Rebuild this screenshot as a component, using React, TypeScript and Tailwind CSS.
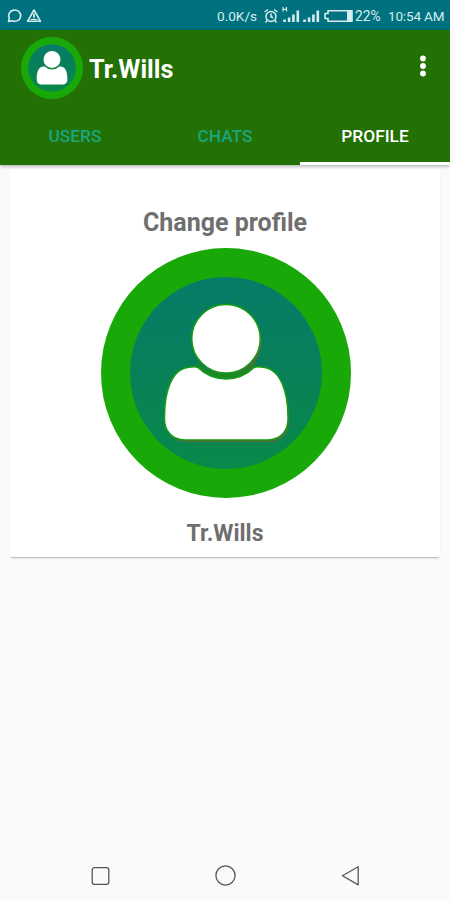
import { useId, useState } from "react";

const TABS = ["USERS", "CHATS", "PROFILE"];

function Avatar({ className, small = false }: { className: string; small?: boolean }) {
  const id = useId();
  const body =
    "M88 119.3 Q94 117.8 97 119.5 A40 40 0 0 0 153 119.5 Q156 117.8 162 119.3 C180 121 187 145 187 168 C188 183 180 192 166 192 H84 C71 192 62.5 183 63.5 168 C63.5 145 70 121 88 119.3 Z";

  return (
    <svg viewBox="0 0 250 250" className={className}>
      <defs>
        <linearGradient id={id} x1="0" y1="0" x2="0" y2="1">
          <stop offset="0" stopColor="#067b68" />
          <stop offset="0.5" stopColor="#088058" />
          <stop offset="1" stopColor="#088a49" />
        </linearGradient>
      </defs>
      <circle cx="125" cy="125" r="125" fill="#18a909" />
      <circle cx="125" cy="125" r="96" fill={`url(#${id})`} />
      {/* offset shadow under the figure */}
      {!small && (
        <g fill="#526b45">
          <circle cx="127" cy="93.5" r="34" />
          <path d={body} transform="translate(1.2 2.2)" />
        </g>
      )}
      <path d="M95 112 C104 130 146 130 155 112 L153 119.5 A40 40 0 0 1 97 119.5 Z" fill="#1b8922" />
      <g fill="#fff" stroke="#169b16" strokeWidth={small ? 0 : 1.6}>
        <path d={body} />
        <circle cx="125" cy="90.7" r="34.3" />
      </g>
    </svg>
  );
}

function Signal({ mobile = false }: { mobile?: boolean }) {
  return (
    <svg viewBox="0 0 18 18" className="h-[18px] w-[18px] shrink-0" fill="#d5edee">
      <rect x="1.2" y="12.5" width="2.7" height="2.5" />
      <rect x="5.8" y="10.5" width="2.6" height="4.5" />
      <rect x="10.1" y="7.5" width="2.6" height="7.5" />
      <rect x="14.5" y="3.5" width="2.6" height="11.5" />
      {mobile && <path d="M1 0v4.5M4.5 0v4.5M1 2.3h3.5" stroke="#d5edee" strokeWidth="1.2" />}
    </svg>
  );
}

function StatusBar() {
  return (
    <div className="flex h-[30px] shrink-0 items-center bg-[#00727f] pl-[7px] pr-[6px] pt-[2px] text-[13.8px] text-[#d5edee]">
      <svg viewBox="0 0 36 18" className="h-[18px] w-[36px]" fill="none" stroke="#d5edee" strokeWidth="1.6">
        <path d="M1.5 14.5 L2.3 11.2 A6 5.6 0 1 1 5 13.7 Z" strokeLinejoin="round" />
        <path d="M27 3 L33.5 14.3 H20.5 Z" strokeLinejoin="round" />
        <path d="M27 6.5v4M27 11.5v1.5" strokeWidth="1.8" />
        <path d="M23.5 12.5h7" strokeWidth="1" />
      </svg>
      <span className="ml-auto w-[41px] whitespace-nowrap text-[13.6px]">0.0K/s</span>
      <svg viewBox="0 0 16 16" className="ml-[5px] h-[16px] w-[16px]" fill="none" stroke="#d5edee" strokeWidth="1.5">
        <circle cx="8" cy="8.5" r="5" />
        <path d="M1.5 4 L5 1.5 M14.5 4 L11 1.5 M8 5.5v3.3l2.2 1M4 12.5l-1.5 2M12 12.5l1.5 2" />
      </svg>
      <span className="ml-[3px] flex gap-[2px]">
        <Signal mobile />
        <Signal />
      </span>
      <svg viewBox="0 0 31 14" className="ml-[3px] h-[14px] w-[31px]">
        <path d="M5 1.8h24v10.4H5V9.5H2v-5h3z" fill="none" stroke="#d5edee" strokeWidth="1.6" strokeLinejoin="round" />
        <rect x="24" y="2" width="5" height="10" fill="#d5edee" />
      </svg>
      <span className="ml-[1px] w-[27px] whitespace-nowrap">22%</span>
      <span className="ml-[6px] w-[56px] whitespace-nowrap text-[13.5px] tracking-[-0.15px]">10:54 AM</span>
    </div>
  );
}

function NavigationBar() {
  return (
    <nav className="mt-auto grid h-[49px] grid-cols-[75px_50px_200px_50px_75px] items-center">
      <svg viewBox="0 0 24 24" className="col-start-2 h-6 w-6 justify-self-center" fill="none" stroke="#555" strokeWidth="1.3">
        <rect x="4.2" y="3.7" width="16.6" height="16.6" rx="2.2" />
      </svg>
      <svg viewBox="0 0 24 24" className="h-6 w-6 justify-self-center" fill="none" stroke="#555" strokeWidth="1.3">
        <circle cx="12.5" cy="11.5" r="9.6" />
      </svg>
      <svg viewBox="0 0 24 24" className="h-6 w-6 justify-self-center" fill="none" stroke="#555" strokeWidth="1.3" strokeLinejoin="round">
        <path d="M4.5 11.7 L20.2 2.7 V20.9 Z" />
      </svg>
    </nav>
  );
}

export default function App() {
  const [tab, setTab] = useState("PROFILE");

  return (
    <div className="flex h-[900px] w-[450px] flex-col overflow-hidden bg-[#fafafa] font-[Roboto,sans-serif]">
      <StatusBar />

      <header className="h-[135px] shrink-0 bg-[#237005] shadow-[0_1px_4px_rgba(0,0,0,0.35)]">
        <div className="flex h-[76px] items-center pl-[21px]">
          <Avatar small className="h-[62px] w-[62px]" />
          <h1 className="ml-[6px] pt-[3px] text-[25.2px] font-bold text-white">Tr.Wills</h1>
          <button className="ml-auto mr-[23px] pb-[5px]" aria-label="More">
            <svg viewBox="0 0 8 22" className="h-[22px] w-[8px]" fill="#fff">
              <circle cx="4" cy="3.5" r="2.9" />
              <circle cx="4" cy="11" r="2.9" />
              <circle cx="4" cy="18.5" r="2.9" />
            </svg>
          </button>
        </div>
        <div className="grid h-[59px] grid-cols-3">
          {TABS.map((name) => (
            <button
              key={name}
              onClick={() => setTab(name)}
              className={`border-b-[3px] pt-[5px] text-[17.3px] font-medium ${tab === name ? "border-white text-white" : "border-transparent text-[#1aa67e]"}`}
            >
              {name}
            </button>
          ))}
        </div>
      </header>

      <main className="mx-[10px] mt-[4px] flex h-[388px] shrink-0 flex-col items-center rounded-[2px] bg-white shadow-[0_2px_2px_-1px_rgba(0,0,0,0.3)]">
        <h2 className="mt-[37px] text-[25px] leading-[34px] font-bold text-[#6f6f6f]">Change profile</h2>
        <Avatar className="mt-[8px] ml-px h-[250px] w-[250px] shrink-0" />
        <p className="mt-[21px] text-[23px] leading-[30px] font-bold text-[#6f6f6f]">Tr.Wills</p>
      </main>

      <NavigationBar />
    </div>
  );
}
